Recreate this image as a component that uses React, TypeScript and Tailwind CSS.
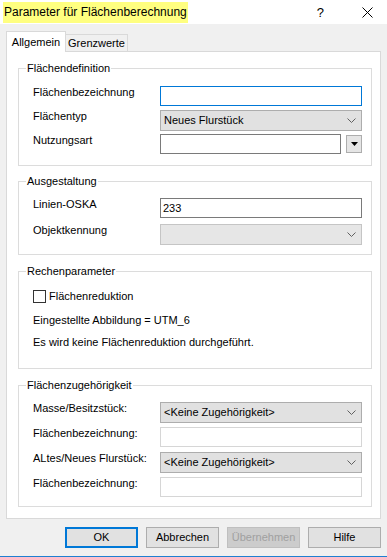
import React from "react";

// kleine Hilfskomponenten für die Windows-Forms-Optik

function Chevron() {
  return (
    <svg width="9" height="5" viewBox="0 0 9 5" className="shrink-0">
      <path d="M0.5 0.5 L4.5 4.5 L8.5 0.5" fill="none" stroke="#606060" strokeWidth="1" />
    </svg>
  );
}

function Combo({ text, width = "w-[202px]", disabled = false }: { text?: string; width?: string; disabled?: boolean }) {
  return (
    <div
      className={`${width} h-[21px] flex items-center pl-[3px] pr-[5px] border ${
        disabled ? "bg-[#e6e6e6] border-[#c5c5c5]" : "bg-[#e1e1e1] border-[#adadad]"
      }`}
    >
      <span className="flex-1 truncate leading-[13px]">{text}</span>
      <Chevron />
    </div>
  );
}

function TextBox({ value, width = "w-[202px]", focused = false, dim = false }: { value?: string; width?: string; focused?: boolean; dim?: boolean }) {
  return (
    <div
      className={`${width} h-[20px] bg-white border flex items-center pl-[2px] leading-[13px] ${
        focused ? "border-[#0078d7]" : dim ? "border-[#d6d6d6]" : "border-[#7a7a7a]"
      }`}
    >
      {value}
    </div>
  );
}

function Row({ label, children, className = "" }: { label: string; children: React.ReactNode; className?: string }) {
  return (
    <div className={`flex items-start pl-[14px] ${className}`}>
      <div className="w-[127px] leading-[13px] whitespace-nowrap">{label}</div>
      {children}
    </div>
  );
}

function Group({ title, height, className = "", children }: { title: string; height: string; className?: string; children: React.ReactNode }) {
  return (
    <div className={`relative w-[354px] ${height} border border-[#dcdcdc] ${className}`}>
      <span className="absolute -top-[7px] left-[7px] bg-white px-[1px] leading-[13px]">{title}</span>
      {children}
    </div>
  );
}

function Button({ label, primary = false, disabled = false }: { label: string; primary?: boolean; disabled?: boolean }) {
  return (
    <button
      className={`w-[73px] h-[21px] flex items-center justify-center leading-[13px] ${
        primary
          ? "bg-[#e1e1e1] border-2 border-[#0078d7]"
          : disabled
          ? "bg-[#cccccc] border border-[#bfbfbf] text-[#a0a0a0]"
          : "bg-[#e1e1e1] border border-[#adadad]"
      }`}
    >
      {label}
    </button>
  );
}

export default function App() {
  return (
    <div className="w-[387px] h-[557px] bg-[#f0f0f0] flex flex-col border-b border-[#1f7fd1] font-['Liberation_Sans',Arial,sans-serif] text-[11px] text-black overflow-hidden">
      {/* Titelleiste */}
      <div className="h-[24px] bg-white flex items-center shrink-0">
        <span className="ml-[3px] h-[21px] w-[185px] bg-[#ffff80] flex items-center text-[12px] pl-[1px]">
          Parameter für Flächenberechnung
        </span>
        <span className="ml-auto text-[13px] leading-none mr-[38px]">?</span>
        <svg width="11" height="11" viewBox="0 0 11 11" className="mr-[14px]">
          <path d="M0.5 0.5 L10.5 10.5 M10.5 0.5 L0.5 10.5" stroke="#000" strokeWidth="1" />
        </svg>
      </div>

      <div className="px-[6px] pt-[7px]">
        {/* Reiter */}
        <div className="flex items-end h-[20px]">
          <div className="relative z-10 -mb-px h-[21px] w-[60px] bg-white border border-b-0 border-[#d9d9d9] flex items-center justify-center leading-[13px]">
            Allgemein
          </div>
          <div className="h-[17px] w-[62px] bg-[#f0f0f0] border border-l-0 border-b-0 border-[#d9d9d9] flex items-center justify-center leading-[13px]">
            Grenzwerte
          </div>
        </div>

        {/* Inhalt */}
        <div className="w-[375px] h-[468px] bg-white border border-[#d9d9d9] pl-[11px] pt-[16px]">
          <Group title="Flächendefinition" height="h-[98px]">
            <Row label="Flächenbezeichnung" className="mt-[17px]">
              <TextBox focused />
            </Row>
            <Row label="Flächentyp" className="mt-[4px]">
              <Combo text="Neues Flurstück" />
            </Row>
            <Row label="Nutzungsart" className="mt-[3px]">
              <TextBox width="w-[181px]" />
              <div className="ml-[5px] mt-px w-[16px] h-[18px] bg-[#e5e5e5] border border-[#adadad] flex items-center justify-center">
                <svg width="7" height="4" viewBox="0 0 7 4">
                  <path d="M0 0 H7 L3.5 4 Z" fill="#000" />
                </svg>
              </div>
            </Row>
          </Group>

          <Group title="Ausgestaltung" height="h-[74px]" className="mt-[15px]">
            <Row label="Linien-OSKA" className="mt-[16px]">
              <TextBox value="233" />
            </Row>
            <Row label="Objektkennung" className="mt-[6px]">
              <Combo disabled />
            </Row>
          </Group>

          <Group title="Rechenparameter" height="h-[98px]" className="mt-[16px]">
            <div className="flex items-center pl-[14px] mt-[18px] h-[13px]">
              <div className="w-[13px] h-[13px] border border-[#333333] bg-white" />
              <span className="ml-[3px] leading-[13px]">Flächenreduktion</span>
            </div>
            <div className="pl-[14px] mt-[11px] leading-[13px]">Eingestellte Abbildung = UTM_6</div>
            <div className="pl-[14px] mt-[9px] leading-[13px]">Es wird keine Flächenreduktion durchgeführt.</div>
          </Group>

          <Group title="Flächenzugehörigkeit" height="h-[122px]" className="mt-[16px]">
            <Row label="Masse/Besitzstück:" className="mt-[16px]">
              <Combo text="<Keine Zugehörigkeit>" />
            </Row>
            <Row label="Flächenbezeichnung:" className="mt-[4px]">
              <TextBox dim />
            </Row>
            <Row label="ALtes/Neues Flurstück:" className="mt-[5px]">
              <Combo text="<Keine Zugehörigkeit>" />
            </Row>
            <Row label="Flächenbezeichnung:" className="mt-[4px]">
              <TextBox dim />
            </Row>
          </Group>
        </div>
      </div>

      {/* Schaltflächen */}
      <div className="flex justify-end gap-[8px] pr-[6px] mt-[8px]">
        <Button label="OK" primary />
        <Button label="Abbrechen" />
        <Button label="Übernehmen" disabled />
        <Button label="Hilfe" />
      </div>
    </div>
  );
}
